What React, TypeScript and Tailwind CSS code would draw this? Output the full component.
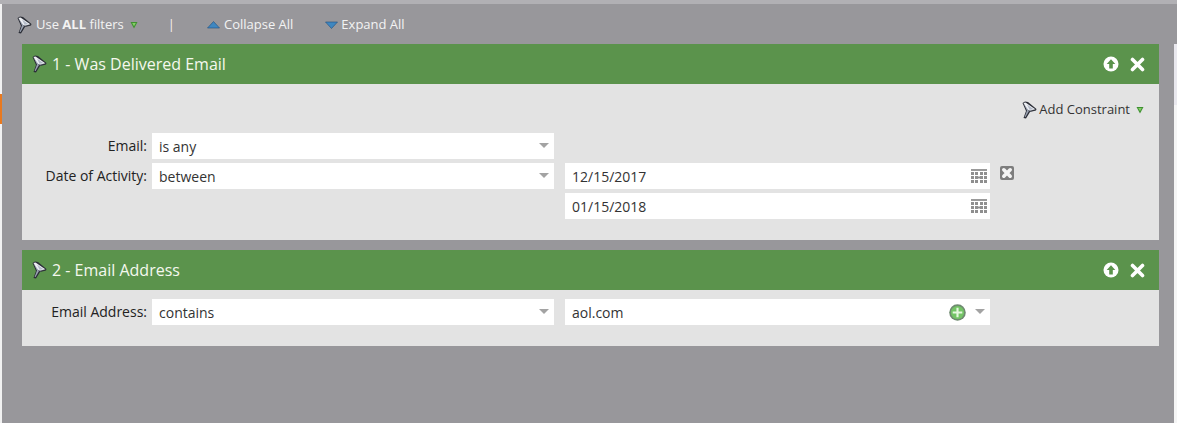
import React from 'react';

const FunnelIcon: React.FC<{ className?: string }> = ({ className }) => (
  <svg className={className} width="16" height="18" viewBox="0 0 16 18">
    <path d="M1.5 2 L4 0.5 L7 1 L15.5 8 L15 9.5 L9 11 L5 17.5 L2.5 17 L5 10 Z" fill="#2b2e37" />
    <path d="M2.5 2 L4.5 1.5 L14.3 8.3 L9 9.8 L6 8.5 Z" fill="#eef0f4" />
    <path d="M3 3 L8 10 L4.5 16 L3.6 16 L6 9.5 Z" fill="#9aa2b2" />
    <path d="M6 3.5 L12.5 8.2 L8.5 8.8 Z" fill="#b4bbc9" />
    <path d="M8.5 10 L13 9 L9 10.6 Z" fill="#6d7484" />
  </svg>
);

const GreenCaret = () => (
  <svg width="8" height="8" viewBox="0 0 8 8">
    <path d="M0.5 1 H7.5 L4 7.5 Z" fill="#3f9130" />
    <path d="M2.2 2 H5.8 L4 5.2 Z" fill="#86cf67" />
  </svg>
);

const GrayCaret = () => (
  <svg width="10" height="5" viewBox="0 0 10 5">
    <path d="M0 0 H10 L5 5 Z" fill="#a3a3a3" />
  </svg>
);

const CalendarIcon = () => (
  <svg width="16" height="15" viewBox="0 0 16 15">
    <rect x="0" y="0" width="16" height="2" fill="#9a9a9a" />
    <path
      d="M0 3h3v3H0zM4 3h3v3H4zM9 3h3v3H9zM13 3h3v3h-3zM0 7h3v3H0zM4 7h3v3H4zM9 7h3v3H9zM13 7h3v3h-3zM0 11h3v3H0zM4 11h3v3H4zM9 11h3v3H9zM13 11h3v3h-3zM7 8h2v1H7zM7.5 7h1v3h-1z"
      fill="#8f8f8f"
    />
  </svg>
);

const RemoveButton = () => (
  <div className="w-[14px] h-[14px] rounded-[2px] bg-[#7d7d7d] flex items-center justify-center">
    <svg width="12" height="12" viewBox="0 0 12 12">
      <path d="M2.8 2.8 L9.2 9.2 M9.2 2.8 L2.8 9.2" stroke="#f4f4f4" strokeWidth="3.6" strokeLinecap="round" />
    </svg>
  </div>
);

const PanelActions = () => (
  <div className="flex items-center gap-[11px]">
    <svg width="16" height="16" viewBox="0 0 16 16">
      <circle cx="8" cy="8" r="7.5" fill="#fff" />
      <path d="M8 3.2 L12.3 8 H9.8 V12.4 H6.2 V8 H3.7 Z" fill="#5b934c" />
    </svg>
    <svg width="15" height="15" viewBox="0 0 15 15">
      <path d="M2.5 2.5 L12.5 12.5 M12.5 2.5 L2.5 12.5" stroke="#fff" strokeWidth="3.6" strokeLinecap="round" />
    </svg>
  </div>
);

const PanelHeader: React.FC<{ title: string }> = ({ title }) => (
  <div className="h-10 bg-[#5b934c] flex items-center justify-between pl-[9px] pr-[14px]">
    <div className="flex items-center gap-[5px]">
      <FunnelIcon />
      <span className="text-[16px] text-[#f5f8ee]">{title}</span>
    </div>
    <PanelActions />
  </div>
);

const FieldBox: React.FC<{ value: string; width: string; children?: React.ReactNode }> = ({
  value,
  width,
  children,
}) => (
  <div className={`h-[26px] bg-white flex items-center justify-between pl-[7px] text-[14px] text-[#333] ${width}`}>
    <span className="pt-[1px]">{value}</span>
    {children}
  </div>
);

const SelectBox: React.FC<{ value: string }> = ({ value }) => (
  <FieldBox value={value} width="w-[402px]">
    <span className="pr-[5px] pb-[2px] flex">
      <GrayCaret />
    </span>
  </FieldBox>
);

const DateBox: React.FC<{ value: string }> = ({ value }) => (
  <FieldBox value={value} width="w-[425px]">
    <span className="pr-[3px] flex">
      <CalendarIcon />
    </span>
  </FieldBox>
);

const Label: React.FC<{ text: string }> = ({ text }) => (
  <div className="w-[125px] mr-[5px] text-right text-[14px] text-[#222] h-[26px] leading-[26px] shrink-0 whitespace-nowrap">
    {text}
  </div>
);

export default function App() {
  return (
    <div className="relative h-[423px] w-[1177px] overflow-hidden flex flex-col bg-[#f1f1f1] font-['Open_Sans',sans-serif]">
      {/* orange tab poking out on the left */}
      <div className="absolute left-0 top-[94px] w-[2px] h-[30px] bg-[#e9791f]" />
      <div className="h-1 shrink-0 bg-[#b1b0b4]" />

      <div className="flex-1 flex">
        <div className="w-[2px] shrink-0 bg-[#f1f1f1]" />

        <div className="flex-1 flex flex-col">
          {/* toolbar */}
          <div className="h-10 shrink-0 bg-[#98979b] flex items-center pl-[14px] pt-[1px] text-[13px] text-[#f3f3f3]">
            <FunnelIcon />
            <span className="ml-[4px]">
              Use <b className="font-bold">ALL</b> filters
            </span>
            <span className="ml-[6px] flex">
              <GreenCaret />
            </span>
            <span className="ml-[30px] text-[#fbeeee]">|</span>
            <span className="ml-[32px] flex">
              <svg width="13" height="8" viewBox="0 0 13 8">
                <path d="M6.5 0.5 L12.5 7 H0.5 Z" fill="#3f87c0" stroke="#1f4f80" strokeWidth="0.6" />
              </svg>
            </span>
            <span className="ml-[4px]">Collapse All</span>
            <span className="ml-[32px] flex">
              <svg width="13" height="8" viewBox="0 0 13 8">
                <path d="M0.5 1 H12.5 L6.5 7.5 Z" fill="#3f87c0" stroke="#1f4f80" strokeWidth="0.6" />
              </svg>
            </span>
            <span className="ml-[3px]">Expand All</span>
          </div>

          <div className="flex-1 flex">
            <div className="w-[1172px] shrink-0 bg-[#98979b] pl-[20px] pr-[15px] flex flex-col gap-[10px]">
              <div>
                <PanelHeader title="1 - Was Delivered Email" />
                <div className="h-[156px] bg-[#e3e3e3] flex flex-col">
                  <div className="h-[49px] shrink-0 flex justify-end pr-[15px] pt-[17px] text-[13px] text-[#333]">
                    <div className="flex items-center h-[18px]">
                      <FunnelIcon />
                      <span className="ml-[2px]">Add Constraint</span>
                      <span className="ml-[6px] flex">
                        <GreenCaret />
                      </span>
                    </div>
                  </div>
                  <div className="flex flex-col gap-1">
                    <div className="flex">
                      <Label text="Email:" />
                      <SelectBox value="is any" />
                    </div>
                    <div className="flex">
                      <Label text="Date of Activity:" />
                      <SelectBox value="between" />
                      <div className="ml-[11px] flex flex-col gap-1">
                        <DateBox value="12/15/2017" />
                        <DateBox value="01/15/2018" />
                      </div>
                      <div className="ml-[10px] mt-[3px]">
                        <RemoveButton />
                      </div>
                    </div>
                  </div>
                </div>
              </div>

              <div>
                <PanelHeader title="2 - Email Address" />
                <div className="h-[56px] bg-[#e3e3e3] pt-[9px] flex">
                  <Label text="Email Address:" />
                  <SelectBox value="contains" />
                  <div className="ml-[11px]">
                    <FieldBox value="aol.com" width="w-[425px]">
                      <span className="flex items-center gap-[9px] pr-[5px]">
                        <svg width="17" height="17" viewBox="0 0 16 16">
                          <circle cx="8" cy="8" r="7.8" fill="#6f8a70" />
                          <circle cx="8" cy="8" r="6.2" fill="#74c466" />
                          <path d="M8 3.5 V12.5 M3.5 8 H12.5" stroke="#e6f8df" strokeWidth="2" />
                        </svg>
                        <span className="flex pb-[1px]">
                          <GrayCaret />
                        </span>
                      </span>
                    </FieldBox>
                  </div>
                </div>
              </div>
            </div>

            {/* strip of the page behind the dialog */}
            <div className="flex-1 flex flex-col">
              <div className="h-[61px] bg-[#e9e8ee]" />
              <div className="flex-1 bg-[#f5f5f5]" />
            </div>
          </div>
        </div>
      </div>
    </div>
  );
}
